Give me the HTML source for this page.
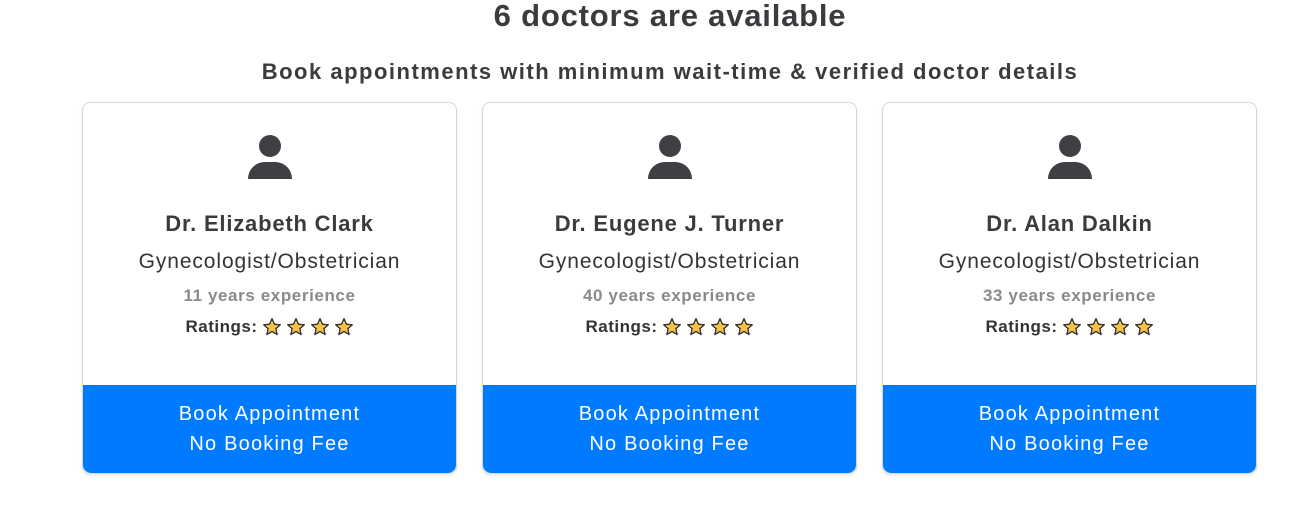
<!DOCTYPE html>
<html><head><style>
body{margin:0;width:1313px;height:510px;background:#fff;font-family:"Liberation Sans",sans-serif;color:#3b3b3f;position:relative;overflow:hidden}
h1{position:absolute;top:0;left:0;width:1340px;margin:0;text-align:center;font-size:31px;line-height:32px;font-weight:bold;letter-spacing:0.8px}
h2{position:absolute;top:58px;left:0;width:1340px;margin:0;text-align:center;font-size:22px;line-height:28px;font-weight:bold;letter-spacing:1.5px}
.card{position:absolute;top:102px;width:373px;height:370px;border:1px solid #d6d6d6;border-radius:8px;box-shadow:0 2px 3px rgba(0,0,0,.08);text-align:center;overflow:hidden}
.icon{position:absolute;left:164px;top:32px}
.name{position:absolute;top:108px;width:100%;font-size:22px;font-weight:bold;letter-spacing:0.8px}
.spec{position:absolute;top:147px;width:100%;font-size:21px;color:#333;letter-spacing:0.9px}
.exp{position:absolute;top:183px;width:100%;font-size:17px;font-weight:bold;color:#8a8a8a;letter-spacing:0.6px}
.rat{position:absolute;top:214px;width:100%;font-size:17px;font-weight:bold;color:#333;letter-spacing:0.5px;display:flex;justify-content:center;align-items:center}
.rat svg{margin-left:4px}
.btn{position:absolute;left:0;top:282px;width:100%;height:88px;background:#007bff;color:#fff;font-size:20px;line-height:30px;padding-top:14px;box-sizing:border-box;border-radius:0 0 8px 8px;letter-spacing:1.2px}
</style></head><body>
<h1>6 doctors are available</h1>
<h2>Book appointments with minimum wait-time &amp; verified doctor details</h2>

<svg width="0" height="0" style="position:absolute"><defs><symbol id="st" viewBox="0 0 24 24"><path d="M12 2l2.9 6.6 7.1.7-5.4 4.8 1.6 7-6.2-3.7-6.2 3.7 1.6-7L2 9.3l7.1-.7z" fill="#f7c245" stroke="#333" stroke-width="1.6" stroke-linejoin="round"/></symbol></defs></svg>

<div class="card" style="left:82px">
<svg class="icon" width="46" height="46" viewBox="0 0 46 46"><circle cx="23" cy="11" r="11" fill="#3f3f44"/><path d="M1 44C1 34 9 27 18 27H28C37 27 45 34 45 44Z" fill="#3f3f44"/></svg>
<div class="name">Dr. Elizabeth Clark</div>
<div class="spec">Gynecologist/Obstetrician</div>
<div class="exp">11 years experience</div>
<div class="rat">Ratings:<svg width="20" height="20"><use href="#st"/></svg><svg width="20" height="20"><use href="#st"/></svg><svg width="20" height="20"><use href="#st"/></svg><svg width="20" height="20"><use href="#st"/></svg></div>
<div class="btn">Book Appointment<br>No Booking Fee</div>
</div>

<div class="card" style="left:482px">
<svg class="icon" width="46" height="46" viewBox="0 0 46 46"><circle cx="23" cy="11" r="11" fill="#3f3f44"/><path d="M1 44C1 34 9 27 18 27H28C37 27 45 34 45 44Z" fill="#3f3f44"/></svg>
<div class="name">Dr. Eugene J. Turner</div>
<div class="spec">Gynecologist/Obstetrician</div>
<div class="exp">40 years experience</div>
<div class="rat">Ratings:<svg width="20" height="20"><use href="#st"/></svg><svg width="20" height="20"><use href="#st"/></svg><svg width="20" height="20"><use href="#st"/></svg><svg width="20" height="20"><use href="#st"/></svg></div>
<div class="btn">Book Appointment<br>No Booking Fee</div>
</div>

<div class="card" style="left:882px">
<svg class="icon" width="46" height="46" viewBox="0 0 46 46"><circle cx="23" cy="11" r="11" fill="#3f3f44"/><path d="M1 44C1 34 9 27 18 27H28C37 27 45 34 45 44Z" fill="#3f3f44"/></svg>
<div class="name">Dr. Alan Dalkin</div>
<div class="spec">Gynecologist/Obstetrician</div>
<div class="exp">33 years experience</div>
<div class="rat">Ratings:<svg width="20" height="20"><use href="#st"/></svg><svg width="20" height="20"><use href="#st"/></svg><svg width="20" height="20"><use href="#st"/></svg><svg width="20" height="20"><use href="#st"/></svg></div>
<div class="btn">Book Appointment<br>No Booking Fee</div>
</div>
</body></html>
